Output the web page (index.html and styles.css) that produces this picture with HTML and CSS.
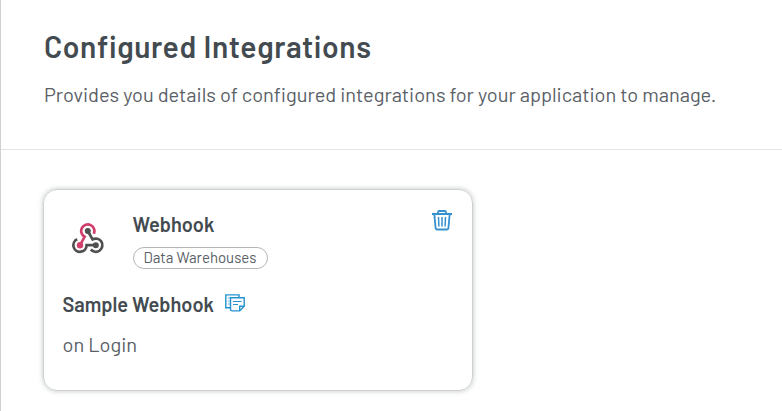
FILE: index.html
```html
<!DOCTYPE html>
<html lang="en">
<head>
<meta charset="utf-8">
<title>Configured Integrations</title>
<link rel="stylesheet" href="styles.css">
</head>
<body>
<main class="page">
  <header class="page-header">
    <h1 class="title"><span>Configured Integrations</span></h1>
    <p class="subtitle"><span>Provides you details of configured integrations for your application to manage.</span></p>
  </header>
  <section class="content">
    <article class="card">
      <div class="card-top">
        <svg class="logo" viewBox="0 0 34 32" fill="none" stroke-width="2.7">
          <g stroke="#505050">
            <path d="M16.800 8l4.800 8.400a6.600 6.600 0 1 1-1.800 10.100"/>
            <path d="M6.200 16.200a6.600 6.600 0 1 0 9.400 6h9.200"/>
          </g>
          <path stroke="#d13f6b" d="M22.800 10.800a6.600 6.600 0 1 0-9.200 3L9 22.200"/>
          <circle cx="16.800" cy="8" r="3" fill="#505050"/>
          <circle cx="9" cy="22.200" r="3.200" fill="#d13f6b"/>
          <circle cx="24.800" cy="22.200" r="3" fill="#505050"/>
        </svg>
        <div class="heading">
          <h2 class="name"><span>Webhook</span></h2>
          <span class="tag"><span>Data Warehouses</span></span>
        </div>
        <svg class="trash" viewBox="0 0 20 21" fill="none" stroke="#3590cf" stroke-width="1.8">
          <path d="M0 4h20M6 4V2.200Q6 1 7.200 1h5.600Q14 1 14 2.200V4M2.300 4l1.300 14.200q.1 1.300 1.400 1.300h10q1.300 0 1.400-1.300L17.700 4"/>
          <path stroke-width="1.5" d="M6.500 7l.4 9.500M10 7v9.500M13.500 7l-.4 9.500"/>
        </svg>
      </div>
      <div class="instance">
        <h3 class="instance-name"><span>Sample Webhook</span></h3>
        <svg class="notes" viewBox="0 0 20 18" fill="none" stroke="#2492d1" stroke-width="1.4">
          <path d="M14 3V.9H.8v12.800H5"/>
          <path stroke-width="1.1" opacity=".7" d="M2.800 4h2M2.800 7h2M2.800 10h2"/>
          <path d="M5.500 3.700h13.700v8.600l-4.500 4.600H7.200q-1.700 0-1.700-1.700zM19 12.300h-4.300v4.300"/>
          <path stroke-width="1.200" d="M8 7.500h8.500M8 10.500h5"/>
        </svg>
      </div>
      <p class="event"><span>on Login</span></p>
    </article>
  </section>
</main>
</body>
</html>
```
FILE: styles.css
```css
* { box-sizing: border-box; }
body {
  margin: 0;
  background: #fff;
  color: #434b51;
  font-family: Barlow, Roboto, sans-serif;
}
h1, h2, h3, p { margin: 0; }
.page {
  min-height: 411px;
  border-left: 1px solid #d0d0d0;
}
.page-header {
  height: 150px;
  padding: 28px 43px 0;
  border-bottom: 1px solid #e4e4e4;
}
.title {
  font-size: 30px;
  line-height: 36px;
  font-weight: 600;
  letter-spacing: 0.6px;
  white-space: nowrap;
}
.subtitle {
  margin-top: 18px;
  color: #596066;
  font-size: 20px;
  line-height: 24px;
  font-weight: 400;
  white-space: nowrap;
}
.content { padding: 39px 41.500px 0; }
.card {
  width: 430px;
  height: 202px;
  padding: 19px 20px 0 19px;
  border: 1px solid #cdd0d0;
  border-radius: 14px;
  box-shadow: 0 0 5px rgba(70, 90, 85, 0.35);
}
.card-top { display: flex; align-items: flex-start; }
.logo { width: 34px; height: 32px; margin: 14px 0 0 8px; }
.heading { margin-left: 28px; padding-top: 3px; }
.name, .instance-name {
  font-size: 20px;
  line-height: 24px;
  font-weight: 600;
  white-space: nowrap;
}
.tag {
  display: flex;
  justify-content: center;
  width: 135px;
  height: 22px;
  margin-top: 11px;
  border: 1px solid #b2b5b7;
  border-radius: 11px;
  color: #596066;
  font-size: 15px;
  line-height: 19px;
  white-space: nowrap;
}
.trash { width: 20px; height: 21px; margin-top: 1px; margin-left: auto; }
.instance {
  display: flex;
  align-items: center;
  margin-top: 23px;
}
.notes { width: 20px; height: 18px; margin: -2px 0 0 11px; }
.event {
  margin-top: 16px;
  color: #596066;
  font-size: 20px;
  line-height: 24px;
  font-weight: 400;
}
```
